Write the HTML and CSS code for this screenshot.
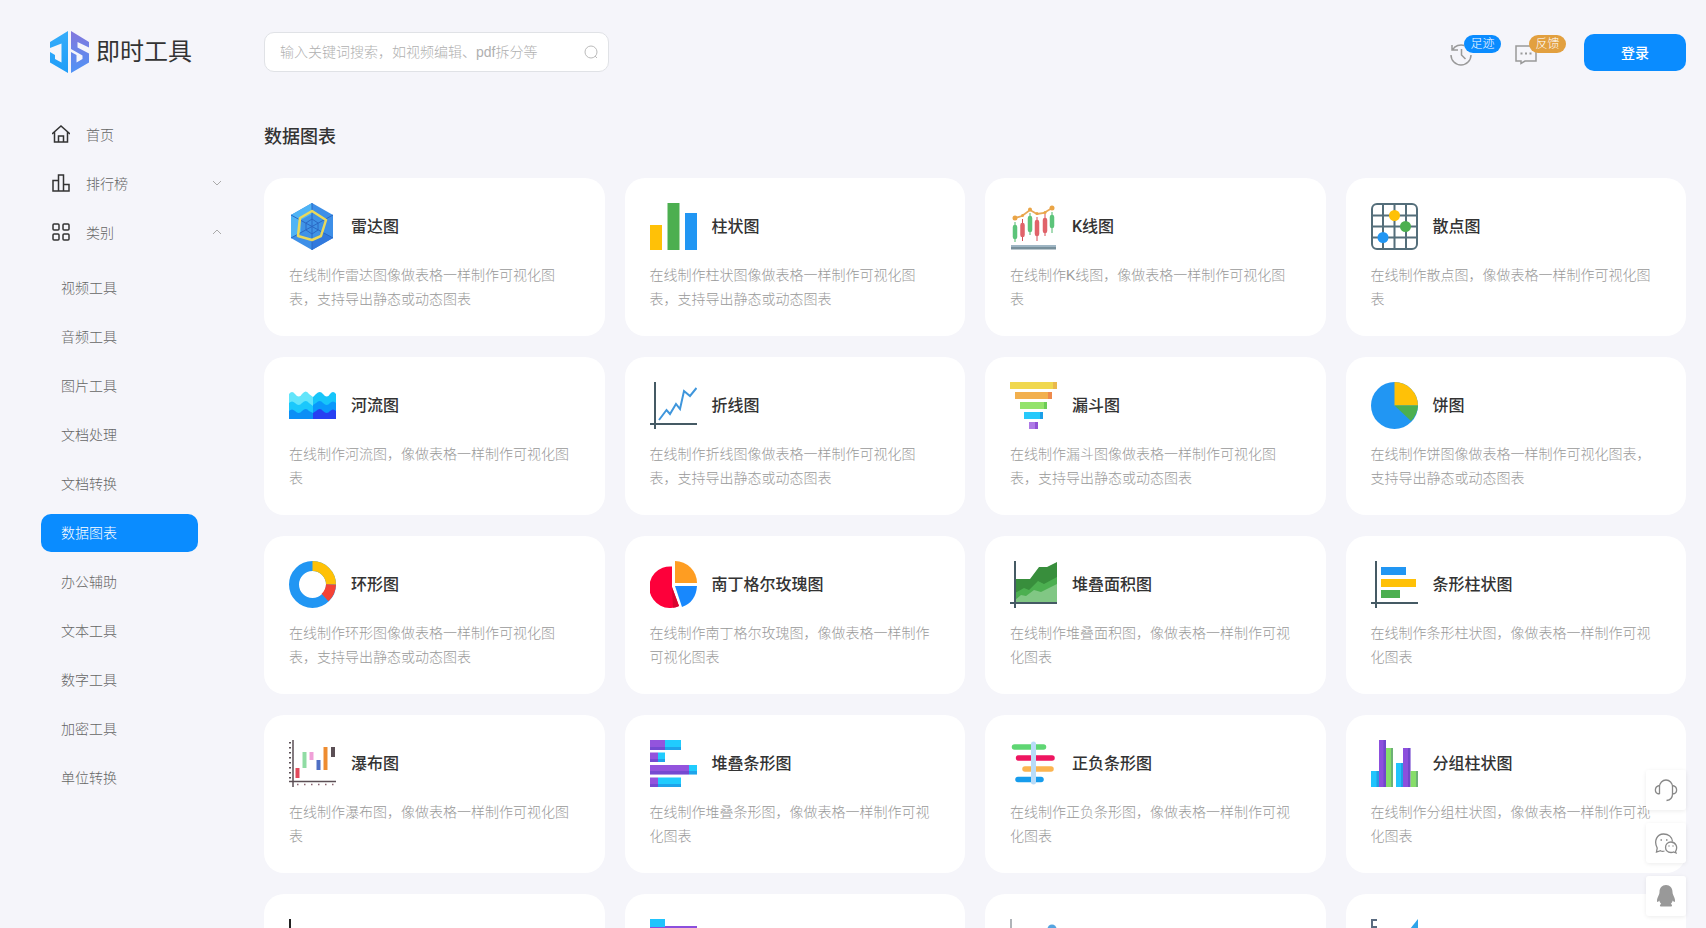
FILE: index.html
```
<!DOCTYPE html>
<html lang="zh-CN">
<head>
  <meta charset="UTF-8">
  <meta name="viewport" content="width=device-width, initial-scale=1.0">
  <title>数据图表 - 即时工具</title>
  <link rel="stylesheet" href="styles.css">
</head>
<body>
  <header class="header">
    <a class="logo" href="#">
      <svg width="39" height="42" viewBox="0 0 39 42">
        <defs>
          <linearGradient id="logo-s" x1="0" y1="0" x2="0" y2="1">
            <stop offset="0" stop-color="#8377dd"/>
            <stop offset="1" stop-color="#4f93f6"/>
          </linearGradient>
          <linearGradient id="logo-j" x1="0" y1="0" x2="0" y2="1">
            <stop offset="0" stop-color="#35adfa"/>
            <stop offset="1" stop-color="#1f9df8"/>
          </linearGradient>
        </defs>
        <path fill="url(#logo-j)" d="M18 0v42L0 31.500V21l5 3v4l6.500 3.500V12.500L0 17v-6z"/>
        <path fill="url(#logo-s)" d="M21 0l18 11v5.500L27.500 11v5.500L39 22.500v9L21 42V21l5.500 3v7.500l6-3.500v-3.500L21 18z"/>
      </svg>
      <span>即时工具</span>
    </a>
    <form class="search">
      <input type="text" aria-label="搜索" placeholder="输入关键词搜索，如视频编辑、pdf拆分等">
      <button type="button" aria-label="搜索">
        <svg width="14" height="14" viewBox="0 0 14 14" fill="none" stroke="#bbb"><circle cx="7" cy="7" r="6"/><path d="M11 11l2 2"/></svg>
      </button>
    </form>
    <div class="actions">
      <a class="action" href="#">
        <svg width="22" height="22" viewBox="0 0 22 22" fill="none" stroke="#999" stroke-width="1.500"><path d="M1 11a10 10 0 1 0 20 0M2 1v5h6M2.500 6a10 10 0 0 1 12-4.500M11.500 5v6l4 4"/></svg>
        <span class="badge">足迹</span>
      </a>
      <a class="action" href="#">
        <svg width="22" height="22" viewBox="0 0 22 22" fill="none" stroke="#999" stroke-width="1.500"><path d="M1 2h20v15H10l-4 2.500V17H1z"/><path d="M5.500 9.500h2m2.500 0h2m2.500 0h2" stroke-width="2"/></svg>
        <span class="badge badge-orange">反馈</span>
      </a>
      <button class="login" type="button">登录</button>
    </div>
  </header>

  <div class="layout">
    <nav class="sidebar">
      <a class="nav-item" href="#">
        <svg width="18" height="18" viewBox="0 0 18 18" fill="none" stroke="#333" stroke-width="1.500"><path d="M0 9l9-8 9 8M2.500 7v10h13V7M6.500 17v-6h5v6"/></svg>
        <span>首页</span>
      </a>
      <button class="nav-item" type="button">
        <svg width="18" height="18" viewBox="0 0 18 18" fill="none" stroke="#333" stroke-width="1.500"><path d="M1 6.500h5.500V17H1zM6.500 1h5v16h-5zM11.500 10.500H17V17h-5.500z"/></svg>
        <span>排行榜</span>
        <svg class="arrow" width="10" height="6" viewBox="0 0 10 6" fill="none" stroke="#aaa"><path d="M1 1l4 4 4-4"/></svg>
      </button>
      <button class="nav-item" type="button">
        <svg width="18" height="18" viewBox="0 0 18 18" fill="none" stroke="#333" stroke-width="1.500"><rect x="1" y="1" width="6" height="6" rx="1"/><rect x="11" y="1" width="6" height="6" rx="1"/><rect x="1" y="11" width="6" height="6" rx="1"/><rect x="11" y="11" width="6" height="6" rx="1"/></svg>
        <span>类别</span>
        <svg class="arrow" width="10" height="6" viewBox="0 0 10 6" fill="none" stroke="#aaa"><path d="M1 5l4-4 4 4"/></svg>
      </button>
      <div class="sub-nav">
        <a href="#">视频工具</a>
        <a href="#">音频工具</a>
        <a href="#">图片工具</a>
        <a href="#">文档处理</a>
        <a href="#">文档转换</a>
        <a href="#" class="active">数据图表</a>
        <a href="#">办公辅助</a>
        <a href="#">文本工具</a>
        <a href="#">数字工具</a>
        <a href="#">加密工具</a>
        <a href="#">单位转换</a>
      </div>
    </nav>

    <main class="main">
      <h1>数据图表</h1>
      <div class="cards">
        <a class="card" href="#">
          <div class="card-head">
            <svg class="icon" viewBox="0 0 47 47">
              <path fill="#3d8fe8" d="M23 0l21 12v23L23 47 2 35V12z"/>
              <path fill="#4fb4f5" d="M23 0v23L2 12zM2 12l21 11L2 35z"/>
              <path fill="#3279dd" d="M23 23l21 12-21 12z"/>
              <path fill="#3f93e6" d="M23 11l11 6v13l-11 6-11-6V17z"/>
              <path fill="none" stroke="#2a68c4" d="M23 0v47M2 12l42 23M44 12L2 35M23 16l6 4v7l-6 4-6-4v-7z"/>
              <path fill="none" stroke="#e9d95b" stroke-width="2.500" stroke-linejoin="round" d="M23 8l14 9-5 16-9 4-14-4 2-18z"/>
            </svg>
            <h2>雷达图</h2>
          </div>
          <p>在线制作雷达图像做表格一样制作可视化图表，支持导出静态或动态图表</p>
        </a>
        <a class="card" href="#">
          <div class="card-head">
            <svg class="icon" viewBox="0 0 47 47">
              <path fill="#ffc107" d="M0 22h12v25H0z"/>
              <path fill="#4caf50" d="M17.500 0h12v47h-12z"/>
              <path fill="#2196f3" d="M35 10h12v37H35z"/>
            </svg>
            <h2>柱状图</h2>
          </div>
          <p>在线制作柱状图像做表格一样制作可视化图表，支持导出静态或动态图表</p>
        </a>
        <a class="card" href="#">
          <div class="card-head">
            <svg class="icon" viewBox="0 0 47 47">
              <path stroke="#4fb86c" d="M5 19v20M20 10v22M42 9v21"/>
              <path stroke="#d64f58" d="M12.500 16v22M27 14v24M35 11v22"/>
              <path stroke="#5cc47a" stroke-width="4.500" stroke-linecap="round" d="M5 24v10M20 15v12M42 14v9"/>
              <path stroke="#e0636a" stroke-width="4.500" stroke-linecap="round" d="M12.500 22v10M27 19v12M35 17v11"/>
              <path fill="none" stroke="#e8a858" stroke-width="1.800" d="M5 15l7-2 8-6 7 4 7-1 8-5"/>
              <g fill="#eaa445"><circle cx="5" cy="15" r="2.500"/><circle cx="42" cy="5" r="2.500"/><circle cx="12.500" cy="12.500" r="1.500"/><circle cx="20" cy="6.500" r="2"/><circle cx="27" cy="10.500" r="1.500"/><circle cx="35" cy="9.500" r="1.500"/></g>
              <path fill="#9fb6c4" d="M1 42h45v2H1z"/>
              <path fill="#78909c" d="M1 44h45v2.500H1z"/>
            </svg>
            <h2>K线图</h2>
          </div>
          <p>在线制作K线图，像做表格一样制作可视化图表</p>
        </a>
        <a class="card" href="#">
          <div class="card-head">
            <svg class="icon" viewBox="0 0 47 47">
              <rect x="1" y="1" width="45" height="45" rx="5" fill="none" stroke="#546e7a" stroke-width="2"/>
              <path stroke="#546e7a" stroke-width="2" d="M12 1v45M23.500 1v45M35 1v45M1 12.500h45M1 23.500h45M1 34.500h45"/>
              <circle cx="23.500" cy="12.500" r="5.500" fill="#ffc107"/>
              <circle cx="34.500" cy="23.500" r="5.500" fill="#4caf50"/>
              <circle cx="12" cy="34.500" r="5.500" fill="#2196f3"/>
            </svg>
            <h2>散点图</h2>
          </div>
          <p>在线制作散点图，像做表格一样制作可视化图表</p>
        </a>

        <a class="card" href="#">
          <div class="card-head">
            <svg class="icon" viewBox="0 0 47 47">
              <path fill="#63e5fb" d="M0 12q3-4 6 0 4 5 7 0 4-5 7 0l4 3v22H0z"/>
              <path fill="#1ac8fc" d="M0 21q3-3 6 0 4 4 7 0 4-4 7 0l4 3v13H0z"/>
              <path fill="#0b8ff6" d="M0 29q3-3 6 0 4 4 7 0 4-4 7 0l4 2v6H0z"/>
              <path fill="#17c5fa" d="M24 15l3-3q4-4 7 0 4 5 7 0 3-4 6 0v25H24z"/>
              <path fill="#0a98fb" d="M24 23l3-2q4-4 7 0 4 4 7 0 3-3 6 0v16H24z"/>
              <path fill="#2740f2" d="M24 31l3-2q4-4 7 0 4 4 7 0 3-3 6 0v8H24z"/>
            </svg>
            <h2>河流图</h2>
          </div>
          <p>在线制作河流图，像做表格一样制作可视化图表</p>
        </a>
        <a class="card" href="#">
          <div class="card-head">
            <svg class="icon" viewBox="0 0 47 47">
              <path stroke="#455a64" stroke-width="2" d="M5 0v47M0 42h47"/>
              <path fill="none" stroke="#3f96dc" stroke-width="2" d="M9 38l7.500-10 3.500 4 6-10 4 5 4-18 6 5 6.500-8"/>
            </svg>
            <h2>折线图</h2>
          </div>
          <p>在线制作折线图像做表格一样制作可视化图表，支持导出静态或动态图表</p>
        </a>
        <a class="card" href="#">
          <div class="card-head">
            <svg class="icon" viewBox="0 0 47 47">
              <path fill="#f0d84f" d="M0 0h47v7H0z"/><path fill="#eab94c" d="M43 0h4v7h-4z"/>
              <path fill="#f2b04e" d="M5 10h37v7H5z"/><path fill="#ee8a4c" d="M38 10h4v7h-4z"/>
              <path fill="#94e36b" d="M10 20h27v7H10z"/><path fill="#6dcc57" d="M34 20h3v7h-3z"/>
              <path fill="#27c9fb" d="M14 30h19v7H14z"/><path fill="#1a9fe8" d="M30 30h3v7h-3z"/>
              <path fill="#ae7ae6" d="M19 40h9v7h-9z"/><path fill="#9152d4" d="M25 40h3v7h-3z"/>
            </svg>
            <h2>漏斗图</h2>
          </div>
          <p>在线制作漏斗图像做表格一样制作可视化图表，支持导出静态或动态图表</p>
        </a>
        <a class="card" href="#">
          <div class="card-head">
            <svg class="icon" viewBox="0 0 47 47">
              <circle cx="23.500" cy="23.500" r="23.500" fill="#2196f3"/>
              <path fill="#ffc107" d="M23.500 0A23.500 23.500 0 0 1 47 23.500H23.500z"/>
              <path fill="#4caf50" d="M47 23.500a23.500 23.500 0 0 1-7 15.500L23.500 23.500z"/>
            </svg>
            <h2>饼图</h2>
          </div>
          <p>在线制作饼图像做表格一样制作可视化图表，支持导出静态或动态图表</p>
        </a>

        <a class="card" href="#">
          <div class="card-head">
            <svg class="icon" viewBox="0 0 47 47">
              <circle cx="23.500" cy="23.500" r="18.500" fill="none" stroke="#2196f3" stroke-width="10"/>
              <path fill="none" stroke="#ffc107" stroke-width="10" d="M23.500 5A18.500 18.500 0 0 1 42 23.500"/>
              <path fill="none" stroke="#f44336" stroke-width="10" d="M42 23.500a18.500 18.500 0 0 1-6 13"/>
            </svg>
            <h2>环形图</h2>
          </div>
          <p>在线制作环形图像做表格一样制作可视化图表，支持导出静态或动态图表</p>
        </a>
        <a class="card" href="#">
          <div class="card-head">
            <svg class="icon" viewBox="0 0 47 47">
              <path fill="#fd003a" d="M22 5.500a20.800 20.800 0 1 0 7 39.500L22 26z"/>
              <path fill="#d8042f" d="M22 26l7 19q-3 1.500-6 1.500z"/>
              <path fill="#fe9d22" d="M25 0a22 22 0 0 1 22 22H25z"/>
              <path fill="#1888fd" d="M25 25h22q-1 16-15 21z"/>
            </svg>
            <h2>南丁格尔玫瑰图</h2>
          </div>
          <p>在线制作南丁格尔玫瑰图，像做表格一样制作可视化图表</p>
        </a>
        <a class="card" href="#">
          <div class="card-head">
            <svg class="icon" viewBox="0 0 47 47">
              <path fill="#388e3c" d="M5 18h15l9-12h8l10-5v41H5z"/>
              <path fill="#4caf50" d="M5 32l9-5 5 2 9-9 6 3 13-7v26H5z"/>
              <path fill="#81c784" d="M5 39l6-5 5 1 8-6 7 2 8-4 8-4v19H5z"/>
              <path stroke="#455a64" stroke-width="2" d="M5 0v47M0 42h47"/>
            </svg>
            <h2>堆叠面积图</h2>
          </div>
          <p>在线制作堆叠面积图，像做表格一样制作可视化图表</p>
        </a>
        <a class="card" href="#">
          <div class="card-head">
            <svg class="icon" viewBox="0 0 47 47">
              <path stroke="#455a64" stroke-width="2" d="M5 0v47M0 42h47"/>
              <path fill="#2196f3" d="M10 6h25v8H10z"/>
              <path fill="#ffc107" d="M10 18h35v8H10z"/>
              <path fill="#4caf50" d="M10 29h19v8H10z"/>
            </svg>
            <h2>条形柱状图</h2>
          </div>
          <p>在线制作条形柱状图，像做表格一样制作可视化图表</p>
        </a>

        <a class="card" href="#">
          <div class="card-head">
            <svg class="icon" viewBox="0 0 47 47">
              <path stroke="#5b4f55" stroke-width="1.500" d="M4 0v47M0 41.500h47"/>
              <path stroke="#5b4f55" stroke-width="2" stroke-dasharray="1.500 3.500" d="M1 2v38"/>
              <path stroke="#e34a5c" stroke-width="4" d="M8.500 28v10"/>
              <path stroke="#90dca4" stroke-width="4" d="M15.500 12v16"/>
              <path stroke="#f0a0d8" stroke-width="4" d="M22.500 12v8"/>
              <path stroke="#4f70c4" stroke-width="4" d="M29.500 20v10"/>
              <path stroke="#ee8c30" stroke-width="4" d="M36.500 7v23"/>
              <path stroke="#5b4f55" stroke-width="4" d="M44 7v10"/>
              <path stroke="#8a6470" stroke-width="1.500" stroke-dasharray="1.500 5.500" d="M8 44.500h38"/>
            </svg>
            <h2>瀑布图</h2>
          </div>
          <p>在线制作瀑布图，像做表格一样制作可视化图表</p>
        </a>
        <a class="card" href="#">
          <div class="card-head">
            <svg class="icon" viewBox="0 0 47 47">
              <path fill="#20ccfe" d="M15 0h16v10H15zM8 12.500h7V22H8zM39 25h8v9.500h-8zM8 37.500h23V47H8z"/>
              <path fill="#9354dd" d="M0 0h15v10H0zM0 12.500h8V22H0zM0 25h39v9.500H0zM0 37.500h8V47H0z"/>
              <path fill="#1b2bb0" fill-opacity=".25" d="M0 7h31v3H0zM0 19h15v3H0zM0 31h47v3.500H0zM0 44h31v3H0z"/>
            </svg>
            <h2>堆叠条形图</h2>
          </div>
          <p>在线制作堆叠条形图，像做表格一样制作可视化图表</p>
        </a>
        <a class="card" href="#">
          <div class="card-head">
            <svg class="icon" viewBox="0 0 47 47">
              <g stroke-width="5.500" stroke-linecap="round">
                <path stroke="#5fd673" d="M4.500 7h29"/>
                <path stroke="#ee1560" d="M8.500 18h33.500"/>
                <path stroke="#fbb450" d="M15 29h26"/>
                <path stroke="#179cec" d="M8 39.500h23"/>
                <path stroke="#b9dcf8" stroke-width="5" d="M23.500 4v38"/>
              </g>
            </svg>
            <h2>正负条形图</h2>
          </div>
          <p>在线制作正负条形图，像做表格一样制作可视化图表</p>
        </a>
        <a class="card" href="#">
          <div class="card-head">
            <svg class="icon" viewBox="0 0 47 47">
              <path fill="#20c4fd" d="M0 31h8v16H0zM25 23h7v24h-7z"/>
              <path fill="#8c4fdd" d="M8 0h7v47H8zM32 8h7.500v39H32z"/>
              <path fill="#86dd69" d="M15 8h7v39h-7zM39.500 31H47v16h-7.500z"/>
              <path fill="#20309a" fill-opacity=".25" d="M12.500 0H15v47h-2.500zM37 8h2.500v39H37zM20 8h2v39h-2zM45 31h2v16h-2zM5.500 31H8v16H5.500zM30 23h2v24h-2z"/>
            </svg>
            <h2>分组柱状图</h2>
          </div>
          <p>在线制作分组柱状图，像做表格一样制作可视化图表</p>
        </a>

        <a class="card" href="#">
          <div class="card-head">
            <svg class="icon" viewBox="0 0 47 47"><path fill="none" stroke="#222" stroke-width="2" d="M1 0v46h46"/></svg>
          </div>
        </a>
        <a class="card" href="#">
          <div class="card-head">
            <svg class="icon" viewBox="0 0 47 47"><path fill="#20c4fd" d="M0 0h15v8H0z"/><path fill="#8c4fdd" d="M15 7h32v40H0V8h15z"/></svg>
          </div>
        </a>
        <a class="card" href="#">
          <div class="card-head">
            <svg class="icon" viewBox="0 0 47 47"><path fill="none" stroke="#b0b4b8" stroke-width="2" d="M1 0v46h46"/><circle cx="42" cy="10" r="4.500" fill="#55a4e0"/></svg>
          </div>
        </a>
        <a class="card" href="#">
          <div class="card-head">
            <svg class="icon" viewBox="0 0 47 47"><path fill="none" stroke="#5a6b80" stroke-width="2" d="M6 1H1v45h46M1 8h5"/><path fill="#2da4ea" d="M47 0v40H15z"/></svg>
          </div>
        </a>
      </div>
    </main>
  </div>

  <div class="float-bar">
    <button type="button" aria-label="客服">
      <svg width="24" height="24" viewBox="0 0 24 24" fill="none" stroke="#888" stroke-width="1.300"><path d="M5.500 16V9a6.500 7 0 0 1 13 0v7c0 4-2 6-6 6.500M5.500 7.500c-5.500 1-5.500 8 0 8.500M18.500 7.500c5.500 1 5.500 8 0 8.500"/></svg>
    </button>
    <button type="button" aria-label="微信">
      <svg width="24" height="24" viewBox="0 0 24 24" fill="none" stroke="#888" stroke-width="1.300"><path d="M10.500 20c-1.500.5-3 .3-4-.3L2.500 21l.7-4C-.5 10 3 3 9.500 3c5 0 8.500 3 9 7.500"/><path d="M21.500 20.500c3-5-.5-9.500-4.500-9.500-7 0-7.500 10.500 0 10.500 1 0 2-.2 2.500-.5l2.500 1z"/><path d="M6.500 9h1.500m4 0h1.500m1 6h1m3 0h1" stroke-width="1.500"/></svg>
    </button>
    <button type="button" aria-label="QQ">
      <svg width="24" height="24" viewBox="0 0 24 24" fill="#999"><path d="M12 1C8 1 5.500 4 5.500 8c0 2-1 3.500-2 6-.8 2-.6 4 0 4 .7 0 1.300-1 1.700-1.500.3 1.200 1 2.500 2 3.500-1.500.5-2 2.500.3 2.500h9c2.300 0 1.800-2 .3-2.500 1-1 1.700-2.300 2-3.500.4.500 1 1.500 1.700 1.500.6 0 .8-2 0-4-1-2.500-2-4-2-6 0-4-2.500-7-6.500-7z"/></svg>
    </button>
  </div>
</body>
</html>
```
FILE: styles.css
```
* {
  box-sizing: border-box;
}
body {
  margin: 0;
  background-color: #f5f5fa;
  color: #333;
  font-family: "Liberation Sans", "Noto Sans CJK SC", sans-serif;
  font-size: 14px;
  font-weight: 300;
}
a {
  color: inherit;
  text-decoration: none;
}
button {
  padding: 0;
  border: none;
  background: none;
  color: inherit;
  font: inherit;
  cursor: pointer;
}
svg {
  display: block;
  flex: none;
}

/* header */
.header {
  display: flex;
  align-items: center;
  padding: 31px 20px 0 0;
}
.logo {
  display: flex;
  flex: none;
  align-items: center;
  gap: 7px;
  width: 264px;
  padding-left: 50px;
  font-size: 24px;
  font-weight: 400;
  line-height: 42px;
}
.search {
  display: flex;
  align-items: center;
  width: 345px;
  height: 40px;
  padding: 0 10px 0 15px;
  border: 1px solid #e0e2e6;
  border-radius: 10px;
  background-color: #fff;
}
.search input {
  flex: 1;
  min-width: 0;
  padding: 0;
  border: none;
  outline: none;
  background: none;
  font: inherit;
}
.search input::placeholder {
  color: #b0b0b0;
}
.actions {
  display: flex;
  align-items: center;
  margin-left: auto;
}
.action {
  position: relative;
  margin-right: 43px;
  padding-top: 6px;
}
.badge {
  position: absolute;
  top: -3px;
  left: 14px;
  width: 37px;
  border-radius: 9px;
  background-color: #0a8cff;
  color: #fff;
  font-size: 12px;
  line-height: 18px;
  text-align: center;
}
.badge-orange {
  background-color: #e2a03f;
}
.login {
  width: 102px;
  height: 37px;
  margin-left: 4px;
  border-radius: 10px;
  background-color: #0a8cff;
  color: #fff;
  font-weight: 500;
}

/* sidebar */
.layout {
  display: flex;
}
.sidebar {
  display: flex;
  flex: none;
  flex-direction: column;
  gap: 11px;
  width: 264px;
  padding-top: 42px;
  color: #666;
}
.nav-item {
  display: flex;
  align-items: center;
  gap: 16px;
  height: 38px;
  padding: 0 42px 0 52px;
}
.arrow {
  margin-left: auto;
}
.sub-nav {
  display: flex;
  flex-direction: column;
  gap: 11px;
  padding: 7px 66px 0 41px;
}
.sub-nav a {
  padding-left: 20px;
  border-radius: 10px;
  line-height: 38px;
}
.sub-nav .active {
  background-color: #0a8cff;
  color: #fff;
}

/* cards */
.main {
  flex: 1;
  min-width: 0;
  padding: 52px 20px 20px 0;
}
h1 {
  margin: 0 0 29px;
  font-size: 18px;
  font-weight: 500;
  line-height: 24px;
}
.cards {
  display: grid;
  grid-template-columns: repeat(4, 1fr);
  gap: 21px 20px;
}
.card {
  min-height: 158px;
  padding: 25px 28px 25px 25px;
  border-radius: 20px;
  background-color: #fff;
}
.card-head {
  display: flex;
  align-items: center;
  gap: 15px;
}
.icon {
  width: 47px;
  height: 47px;
}
h2 {
  margin: 0;
  font-family: Roboto, "Noto Sans CJK SC", sans-serif;
  font-size: 16px;
  font-weight: 500;
  line-height: 24px;
}
.card p {
  margin: 13px 0 0;
  color: #999;
  line-height: 24px;
}

/* floating buttons */
.float-bar {
  position: fixed;
  right: 20px;
  bottom: 12px;
  display: flex;
  flex-direction: column;
  gap: 13px;
}
.float-bar button {
  display: flex;
  align-items: center;
  justify-content: center;
  width: 40px;
  height: 40px;
  border-radius: 3px;
  background-color: #fff;
  box-shadow: 0 1px 4px rgba(0, 0, 0, 0.08);
}
```
